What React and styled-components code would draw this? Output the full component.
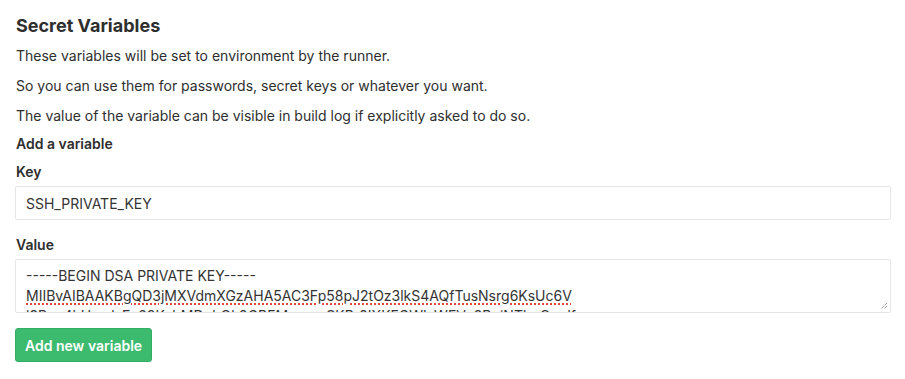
import React from "react";
import styled, { createGlobalStyle } from "styled-components";

const GlobalStyle = createGlobalStyle`
  body {
    margin: 0;
    background: #fff;
    color: #2e2e2e;
    font-family: Inter, "Noto Sans", sans-serif;
    font-size: 14px;
  }
`;

function App() {
  return (
    <Page>
      <GlobalStyle />
      <Title>Secret Variables</Title>
      <Text>These variables will be set to environment by the runner.</Text>
      <Text>So you can use them for passwords, secret keys or whatever you want.</Text>
      <Text>The value of the variable can be visible in build log if explicitly asked to do so.</Text>
      <SubTitle>Add a variable</SubTitle>
      <Label>Key</Label>
      <Input>SSH_PRIVATE_KEY</Input>
      <Label spaced>Value</Label>
      <TextBox>
        <Line>-----BEGIN DSA PRIVATE KEY-----</Line>
        <Line misspelt>MIIBvAIBAAKBgQD3jMXVdmXGzAHA5AC3Fp58pJ2tOz3lkS4AQfTusNsrg6KsUc6V</Line>
        <Line>l9Bvq4hUvmlsFu68KybMDqhQk0GBFMrmmeSKRr0IXKFGWIcWEVz2BqiNTbuCmdf</Line>
        <Grip viewBox="0 0 8 8">
          <path d="M7 1 L1 7 M7 4 L4 7" stroke="#666" strokeWidth="1" strokeDasharray="1 1" />
        </Grip>
      </TextBox>
      <Button>Add new variable</Button>
    </Page>
  );
}

export default App;

const Page = styled.div`
  padding: 14px 14px 0 15px;
  display: flex;
  flex-direction: column;
`;

const Title = styled.h4`
  margin: 0 0 8px 1px;
  font-size: 18px;
  line-height: 24px;
  font-weight: 700;
`;

const Text = styled.p`
  margin: 0 0 10px 1px;
  line-height: 20px;
  &:last-of-type {
    margin-bottom: 8px;
  }
`;

const SubTitle = styled.div`
  margin: 0 0 8px 1px;
  line-height: 20px;
  font-weight: 600;
`;

const Label = styled.label`
  margin: ${(props) => (props.spaced ? "15px" : "0")} 0 4px 1px;
  line-height: 20px;
  font-weight: 600;
`;

const Input = styled.div`
  height: 34px;
  box-sizing: border-box;
  border: 1px solid #e5e5e5;
  border-radius: 2px;
  padding: 0 10px;
  display: flex;
  align-items: center;
  color: #333;
`;

const TextBox = styled.div`
  position: relative;
  height: 54px;
  box-sizing: border-box;
  border: 1px solid #e5e5e5;
  border-radius: 2px;
  padding: 6px 10px 0;
  overflow: hidden;
  color: #333;
`;

const Line = styled.div`
  line-height: 20px;
  white-space: nowrap;
  text-decoration: ${(props) => (props.misspelt ? "underline dotted #e0463a" : "none")};
  text-decoration-thickness: 2px;
  text-underline-offset: 2px;
`;

const Grip = styled.svg`
  position: absolute;
  right: 2px;
  bottom: 2px;
  width: 8px;
  height: 8px;
`;

const Button = styled.button`
  align-self: flex-start;
  margin-top: 15px;
  height: 34px;
  padding: 0 9px;
  background: #3cbb6f;
  border: 1px solid #34ad64;
  border-radius: 3px;
  color: #fff;
  font-family: inherit;
  font-size: 14px;
  font-weight: 600;
`;
